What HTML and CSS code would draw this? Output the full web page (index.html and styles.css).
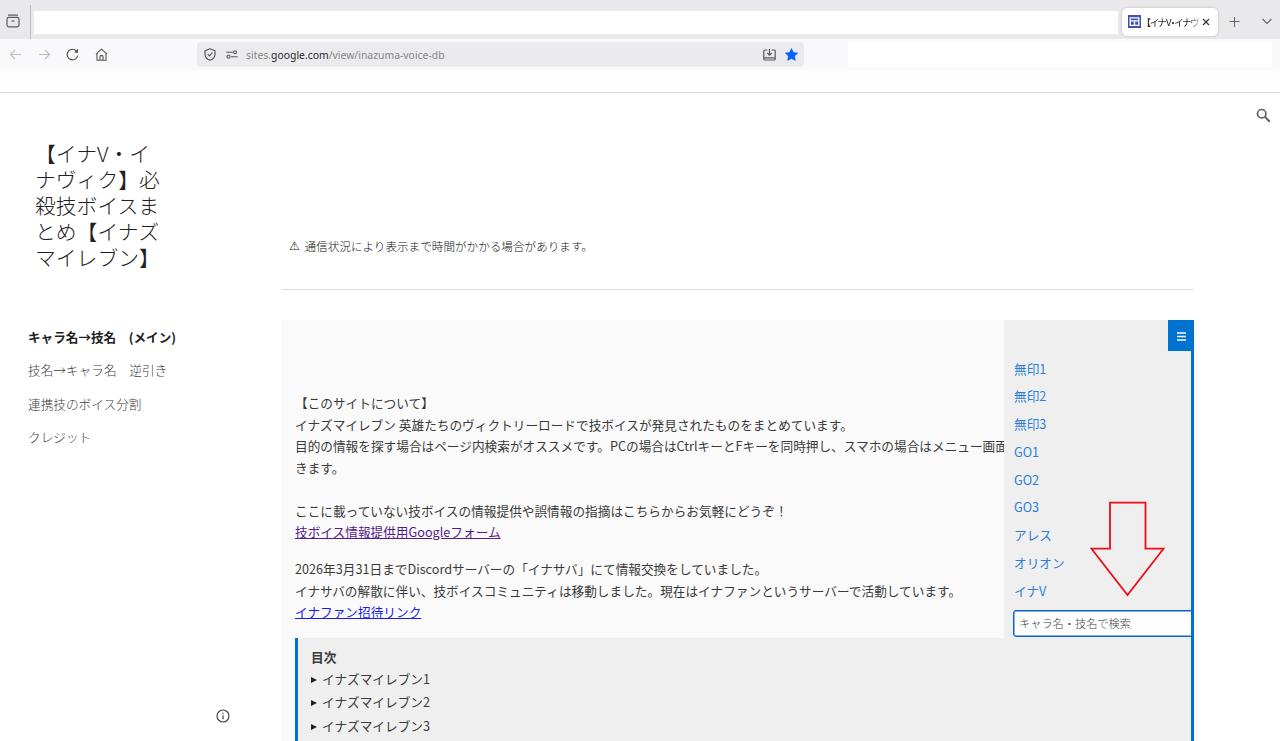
FILE: index.html
```html
<!DOCTYPE html>
<html lang="ja">

<head>
    <meta charset="UTF-8">
    <meta name="viewport" content="width=device-width, initial-scale=1.0">
    <title>【イナV・イナヴィク】必殺技ボイスまとめ【イナズマイレブン】</title>
    <link rel="stylesheet" href="styles.css">
</head>

<body>
    <div class="browser">
        <div class="tab-strip">
            <div class="tab-history">
                <svg width="14" height="14" viewBox="0 0 14 14" fill="none" stroke="#5b5b66" stroke-width="1.2">
                    <path d="M2.5 1.2h9" stroke-linecap="round" />
                    <rect x="1" y="3.4" width="12" height="9.4" rx="1.8" />
                    <path d="M5.5 7h3" />
                </svg>
            </div>
            <div class="tab-blank"></div>
            <div class="tab">
                <svg width="13" height="13" viewBox="0 0 13 13">
                    <rect width="13" height="13" fill="#3f51b5" />
                    <path d="M2.200 2.800h8.600v7.600H2.200zM2 5.800h9M6.500 5.800v4.800" fill="none" stroke="#fff" stroke-width="1.3" />
                </svg>
                <span class="tab-title">【イナV・イナヴ</span>
                <svg width="8" height="8" viewBox="0 0 8 8" fill="none" stroke="#333" stroke-width="1.2">
                    <path d="M1 1l6 6M7 1l-6 6" />
                </svg>
            </div>
            <svg class="tab-add" width="12" height="12" viewBox="0 0 12 12" fill="none" stroke="#65656c">
                <path d="M5.500 1v10M.5 5.500h10" />
            </svg>
            <svg class="tab-list" width="12" height="12" viewBox="0 0 12 12" fill="none" stroke="#65656c" stroke-width="1.1">
                <path d="M1.500 3l4.500 4.500L10.500 3" />
            </svg>
        </div>

        <div class="toolbar">
            <div class="nav-buttons">
                <svg width="13" height="13" viewBox="0 0 13 13" fill="none" stroke="#bdbdc2" stroke-width="1.1">
                    <path d="M12 6.500H1.500M6 2L1.500 6.500 6 11" />
                </svg>
                <svg width="13" height="13" viewBox="0 0 13 13" fill="none" stroke="#bdbdc2" stroke-width="1.1">
                    <path d="M1 6.500h10.500M7 2l4.500 4.500L7 11" />
                </svg>
                <svg width="13" height="13" viewBox="0 0 13 13" fill="none" stroke="#55555e" stroke-width="1.2">
                    <path d="M11.700 7.500A5.300 5.300 0 1 1 10.600 3.200l1 1" />
                    <path d="M12 .8v4H8z" fill="#55555e" stroke="none" />
                </svg>
                <svg width="13" height="13" viewBox="0 0 13 13" fill="none" stroke="#55555e" stroke-width="1.1" stroke-linejoin="round">
                    <path d="M1 6.200l5.500-5 5.500 5M2 5.500v6.800h9V5.500M5 12.200V8.500q0-.9.900-.9h1.200q.9 0 .9.900v3.700" />
                </svg>
            </div>
            <div class="url-bar">
                <svg width="12" height="13" viewBox="0 0 12 13" fill="none" stroke="#55555e" stroke-width="1.2" stroke-linejoin="round">
                    <path d="M6 .8l5 1.900v3.500c0 3-2 4.900-5 6-3-1.100-5-3-5-6V2.700z" />
                    <path d="M3.700 6.200l1.700 1.700 3-3.200" />
                </svg>
                <svg class="site-settings" width="12" height="9" viewBox="0 0 12 9" fill="none" stroke="#55555e" stroke-width="1.1">
                    <path d="M.3 2.300h6.500M5 6.700h6.700" />
                    <circle cx="9" cy="2.300" r="1.500" />
                    <circle cx="2.500" cy="6.700" r="1.500" />
                </svg>
                <span class="url">sites.<b>google.com</b>/view/inazuma-voice-db</span>
                <svg width="13" height="12" viewBox="0 0 13 12" fill="none" stroke="#55555e" stroke-width="1.2">
                    <path d="M4.300 1H1.900Q.8 1 .8 2v8q0 1 1.100 1h9.200q1.100 0 1.100-1V2q0-1-1.100-1H8.700M.8 8.800h11.400M6.500 0v6M4.300 4l2.200 2.200L8.700 4" />
                </svg>
                <svg class="star" width="13" height="13" viewBox="0 0 13 13" fill="#0561fb">
                    <path d="M6.500.5l1.900 3.900 4.300.6-3.100 3 .7 4.400-3.800-2-3.800 2 .7-4.400-3.100-3 4.300-.6z" stroke="#0561fb" stroke-width=".6" stroke-linejoin="round" />
                </svg>
            </div>
            <div class="toolbar-blank"></div>
        </div>
        <div class="bookmarks"></div>
    </div>

    <div class="page">
        <div class="side">
            <h1 class="site-title">【イナV・イ<br>ナヴィク】必<br>殺技ボイスま<br>とめ【イナズ<br>マイレブン】</h1>
            <ul class="menu">
                <li class="active">キャラ名→技名　(メイン)</li>
                <li>技名→キャラ名　逆引き</li>
                <li>連携技のボイス分割</li>
                <li>クレジット</li>
            </ul>
            <svg class="info" width="14" height="14" viewBox="0 0 14 14" fill="none" stroke="#444" stroke-width="1.2">
                <circle cx="7" cy="7" r="6" />
                <path d="M7 6.200v4M7 3.700v1.300" />
            </svg>
        </div>

        <div class="main">
            <p class="notice"><span class="warn">⚠</span>通信状況により表示まで時間がかかる場合があります。</p>

            <div class="embed">
                <div class="about">
                    <p>
                        【このサイトについて】<br>
                        イナズマイレブン 英雄たちのヴィクトリーロードで技ボイスが発見されたものをまとめています。<br>
                        目的の情報を探す場合はページ内検索がオススメです。PCの場合はCtrlキーとFキーを同時押し、スマホの場合はメニュー画面<br>
                        きます。<br>
                        <br>
                        ここに載っていない技ボイスの情報提供や誤情報の指摘はこちらからお気軽にどうぞ！<br>
                        <a class="visited" href="#">技ボイス情報提供用Googleフォーム</a>
                    </p>
                    <p>
                        2026年3月31日までDiscordサーバーの「イナサバ」にて情報交換をしていました。<br>
                        イナサバの解散に伴い、技ボイスコミュニティは移動しました。現在はイナファンというサーバーで活動しています。<br>
                        <a href="#">イナファン招待リンク</a>
                    </p>
                </div>

                <div class="toc">
                    <b>目次</b>
                    <ul>
                        <li>イナズマイレブン1</li>
                        <li>イナズマイレブン2</li>
                        <li>イナズマイレブン3</li>
                    </ul>
                </div>

                <div class="drawer">
                    <ul>
                        <li>無印1</li>
                        <li>無印2</li>
                        <li>無印3</li>
                        <li>GO1</li>
                        <li>GO2</li>
                        <li>GO3</li>
                        <li>アレス</li>
                        <li>オリオン</li>
                        <li>イナV</li>
                    </ul>
                    <input type="text" class="search-box" placeholder="キャラ名・技名で検索">
                </div>
                <div class="drawer-button">
                    <svg width="9" height="9" viewBox="0 0 9 9" stroke="#fff" stroke-width="1.3">
                        <path d="M0 1h9M0 4.500h9M0 8h9" />
                    </svg>
                </div>
                <svg class="arrow" width="76" height="96" viewBox="0 0 76 96" fill="none" stroke="#ee0c18" stroke-width="1.8">
                    <path d="M20 1.700h35.500v46H73.500L37.500 94 1.500 47.700H20z" />
                </svg>
            </div>
        </div>

        <svg class="search-icon" width="15" height="15" viewBox="0 0 15 15" fill="none" stroke="#616161" stroke-width="1.7">
            <circle cx="5.700" cy="5.700" r="4.200" />
            <path d="M8.800 8.800l5 5" stroke-width="2" />
        </svg>
    </div>
</body>

</html>
```

FILE: styles.css
```css
html,
body {
    margin: 0;
    height: 100%;
    overflow: hidden;
    background-color: #fff;
}

body {
    display: flex;
    flex-direction: column;
    font-family: "Noto Sans CJK JP", sans-serif;
    font-size: 12.67px;
    color: #3a3a3a;
}

ul {
    margin: 0;
    padding: 0;
    list-style: none;
}

svg {
    display: block;
    flex-shrink: 0;
}

/* Browser window */
.browser {
    flex: none;
    border-bottom: 1px solid #d8d8db;
}

.tab-strip {
    display: flex;
    align-items: center;
    height: 39px;
    background-color: #e9e9eb;
}

.tab-history {
    display: flex;
    align-items: center;
    box-sizing: border-box;
    width: 31px;
    height: 34px;
    margin-top: 5px;
    padding: 0 0 2px 6px;
    border-right: 1px solid #bebec3;
}

.tab-blank {
    width: 1084px;
    height: 23px;
    margin: 6px 4px 0 3px;
    background-color: #fff;
}

.tab {
    display: flex;
    align-items: center;
    box-sizing: border-box;
    width: 96px;
    height: 28px;
    margin-top: 4px;
    padding: 0 9px 0 6px;
    border-radius: 5px;
    background-color: #fff;
    box-shadow: 0 0 3px rgba(0, 0, 0, 0.2);
}

.tab-title {
    flex: 1;
    margin: 0 3px 0 5px;
    white-space: nowrap;
    font-size: 9.5px;
    font-feature-settings: "palt";
    letter-spacing: -0.7px;
    color: #222;
    -webkit-mask-image: linear-gradient(to right, #000 80%, rgba(0, 0, 0, 0.3));
    mask-image: linear-gradient(to right, #000 80%, rgba(0, 0, 0, 0.3));
}

.tab-add {
    margin: 4px 0 0 11px;
}

.tab-list {
    margin: 4px 0 0 20px;
}

.toolbar {
    display: flex;
    align-items: center;
    height: 31px;
    background-color: #f9f9fb;
}

.nav-buttons {
    display: flex;
    gap: 15.5px;
    width: 188px;
    padding-left: 9px;
}

.url-bar {
    display: flex;
    align-items: center;
    box-sizing: border-box;
    width: 607px;
    height: 25px;
    padding: 0 6px 0 7px;
    border-radius: 4px;
    background-color: #ebebed;
}

.site-settings {
    margin-left: 10px;
}

.url {
    flex: 1;
    margin-left: 8px;
    font-family: "Noto Sans", sans-serif;
    font-size: 10.4px;
    color: #85858a;
}

.url b {
    font-weight: normal;
    color: #25252a;
}

.star {
    margin-left: 9px;
}

.toolbar-blank {
    width: 424px;
    height: 26px;
    margin-left: 44px;
    background-color: #fff;
}

.bookmarks {
    height: 22px;
    background-color: #fefefe;
}

/* Site */
.page {
    display: flex;
    flex: 1;
    min-height: 0;
}

.side {
    display: flex;
    flex-direction: column;
    box-sizing: border-box;
    width: 282px;
    padding: 47px 0 18px 28px;
}

.site-title {
    margin: 0 0 50px 7px;
    font-size: 20.8px;
    line-height: 26px;
    font-weight: 300;
    color: #212121;
}

.menu {
    line-height: 33.3px;
    font-weight: 300;
    color: #404040;
}

.menu .active {
    font-size: 12.6px;
    font-weight: bold;
    color: #212121;
}

.info {
    margin: auto 0 0 188px;
}

.main {
    display: flex;
    flex-direction: column;
    width: 912px;
}

.notice {
    display: flex;
    align-items: center;
    box-sizing: border-box;
    height: 197px;
    margin: 0 0 30px;
    padding: 110px 0 0 7px;
    border-bottom: 1px solid #dcdcdc;
    font-size: 11.6px;
    font-weight: 300;
    color: #111;
}

.warn {
    width: 15.5px;
    font-family: "DejaVu Sans", sans-serif;
}

.embed {
    position: relative;
    flex: 1;
    box-sizing: border-box;
    padding-left: 13px;
    border-right: 3px solid #0073d1;
    background-color: #fafafa;
    overflow: hidden;
}

.about {
    box-sizing: border-box;
    height: 318px;
    padding-top: 72px;
    line-height: 21.5px;
    white-space: nowrap;
}

.about p {
    margin: 0 0 15.5px;
}

.about a {
    color: #1a1aee;
}

.about .visited {
    color: #551a8b;
}

.toc {
    height: 200px;
    padding: 8px 0 0 13px;
    border-left: 3px solid #0073d1;
    background-color: #efefef;
    line-height: 23.4px;
}

.toc b {
    display: block;
    line-height: 21px;
}

.toc li {
    display: flex;
    align-items: center;
}

.toc li::before {
    content: "";
    width: 0;
    height: 0;
    margin: 2px 5px 0 0;
    border: solid transparent;
    border-width: 3px 0 3px 6px;
    border-left-color: #222;
}

/* Slides over the article */
.drawer {
    position: absolute;
    top: 0;
    right: 0;
    box-sizing: border-box;
    width: 187px;
    height: 318px;
    padding: 34.6px 0 0 9px;
    background-color: #efefef;
    overflow: hidden;
    line-height: 27.75px;
    color: #2b7fd6;
}

.drawer li {
    padding-left: 1px;
}

.search-box {
    display: block;
    box-sizing: border-box;
    width: 190px;
    height: 27px;
    margin-top: 5.4px;
    padding: 0 5px;
    border: 1px solid #0a62d0;
    border-radius: 3px;
    box-shadow: inset 0 0 0 0.5px #0a62d0;
    background-color: #fff;
    font-family: inherit;
    font-size: 11.2px;
    font-weight: 300;
}

.search-box::placeholder {
    color: #444;
}

.drawer-button {
    position: absolute;
    top: 0;
    right: 0;
    display: flex;
    align-items: center;
    justify-content: center;
    box-sizing: border-box;
    width: 23px;
    height: 31px;
    padding: 2px 0 0 3px;
    background-color: #0073d1;
}

.arrow {
    position: absolute;
    top: 181px;
    right: 25px;
}

.search-icon {
    margin: 15px 0 0 62px;
}
```
